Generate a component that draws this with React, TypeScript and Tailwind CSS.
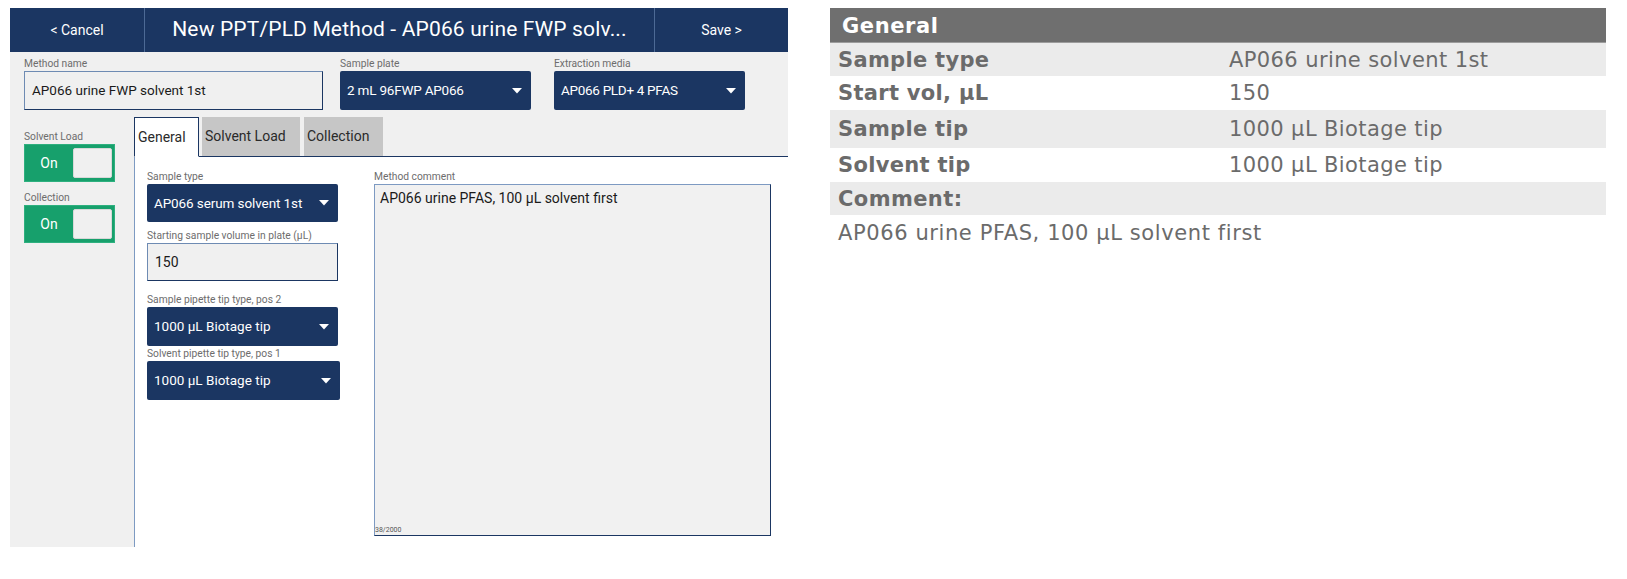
import React from 'react';

const Caret = () => (
  <svg width="10" height="6" viewBox="0 0 10 6" className="shrink-0">
    <path d="M0 0 L10 0 L5 5.5 Z" fill="#ffffff" />
  </svg>
);

const Label = ({ children }: { children: React.ReactNode }) => (
  <div className="h-[14px] text-[10.25px] leading-[14px] text-[#6d6d6d] whitespace-nowrap">{children}</div>
);

const Dropdown = ({ value, className = '' }: { value: string; className?: string }) => (
  <div
    className={`flex items-center justify-between bg-[#1b3662] rounded-[2px] pl-[7px] pr-[9px] text-white text-[13.5px] ${className}`}
  >
    <span className="whitespace-nowrap">{value}</span>
    <Caret />
  </div>
);

const Toggle = ({ label }: { label: string }) => (
  <div>
    <Label>{label}</Label>
    <div className="flex items-center h-[38px] w-[91px] bg-[#17a06c] border border-[#2eb07f]">
      <span className="w-[48px] text-center text-white text-[14px]">On</span>
      <div className="h-[30px] w-[39px] bg-[#f0f0f0] border border-[#d8d8d8] rounded-[2px]" />
    </div>
  </div>
);

const rows = [
  { label: 'Sample type', value: 'AP066 urine solvent 1st', h: 'h-[33px]', bg: 'bg-[#ebebeb]' },
  { label: 'Start vol, µL', value: '150', h: 'h-[34px]', bg: 'bg-white' },
  { label: 'Sample tip', value: '1000 µL Biotage tip', h: 'h-[38px]', bg: 'bg-[#ebebeb]' },
  { label: 'Solvent tip', value: '1000 µL Biotage tip', h: 'h-[34px]', bg: 'bg-white' },
];

export default function App() {
  return (
    <div className="flex min-h-[579px] w-[1627px] bg-white">
      {/* Method editor */}
      <div className="ml-[10px] mt-[8px] flex h-[539px] w-[778px] flex-col [font-family:Roboto,sans-serif]">
        <header className="flex h-[44px] bg-[#1b3662] text-white">
          <div className="flex w-[135px] items-center justify-center border-r border-[#4d6a95] text-[14px]">
            &lt; Cancel
          </div>
          <div className="flex flex-1 items-center justify-center text-[21px] tracking-[0.15px] whitespace-nowrap">
            New PPT/PLD Method - AP066 urine FWP solv...
          </div>
          <div className="flex w-[134px] items-center justify-center border-l border-[#4d6a95] text-[14px]">
            Save &gt;
          </div>
        </header>

        <div className="flex flex-1 flex-col bg-[#f0f0f0]">
          <div className="flex pl-[14px] pt-[5px]">
            <div className="w-[299px]">
              <Label>Method name</Label>
              <div className="flex h-[39px] items-center border border-[#6e8bb3] border-r-[#1b3662] border-b-[#1b3662] bg-[#f0f0f0] pl-[7px] text-[13.5px] text-[#1a1a1a]">
                AP066 urine FWP solvent 1st
              </div>
            </div>
            <div className="ml-[17px] w-[191px]">
              <Label>Sample plate</Label>
              <Dropdown value="2 mL 96FWP AP066" className="h-[39px] tracking-[-0.2px]" />
            </div>
            <div className="ml-[23px] w-[191px]">
              <Label>Extraction media</Label>
              <Dropdown value="AP066 PLD+ 4 PFAS" className="h-[39px] tracking-[-0.3px]" />
            </div>
          </div>

          <div className="flex flex-1 pl-[14px]">
            <div className="flex w-[91px] flex-col gap-[9px] pt-[20px]">
              <Toggle label="Solvent Load" />
              <Toggle label="Collection" />
            </div>

            <div className="ml-[19px] mt-[7px] flex flex-1 flex-col">
              {/* Tabs */}
              <div className="flex h-[40px] border-b border-[#1b3662] text-[14px] text-[#2a2a2a]">
                <div className="-mb-px flex w-[65px] items-center border border-[#1b3662] border-b-white bg-white pl-[3px]">
                  General
                </div>
                <div className="ml-[3px] flex w-[98px] items-center bg-[#c6c6c6] pl-[3px]">Solvent Load</div>
                <div className="ml-[4px] flex w-[79px] items-center bg-[#c6c6c6] pl-[3px]">Collection</div>
              </div>

              <div className="flex flex-1 border-l border-[#7d9ac2] bg-white pl-[12px] pt-[13px]">
                <div className="flex w-[193px] flex-col">
                  <Label>Sample type</Label>
                  <Dropdown value="AP066 serum solvent 1st" className="h-[38px] w-[191px] tracking-[-0.1px]" />
                  <div className="mt-[7px]">
                    <Label>Starting sample volume in plate (µL)</Label>
                  </div>
                  <div className="flex h-[38px] w-[191px] items-center border border-[#6e8bb3] border-r-[#1b3662] border-b-[#1b3662] bg-[#f0f0f0] pl-[7px] text-[14px] text-[#1a1a1a]">
                    150
                  </div>
                  <div className="mt-[12px]">
                    <Label>Sample pipette tip type, pos 2</Label>
                  </div>
                  <Dropdown value="1000 µL Biotage tip" className="h-[39px] w-[191px]" />
                  <div className="mt-[1px]">
                    <Label>Solvent pipette tip type, pos 1</Label>
                  </div>
                  <Dropdown value="1000 µL Biotage tip" className="h-[39px] w-[193px]" />
                </div>

                <div className="ml-[34px] w-[397px]">
                  <Label>Method comment</Label>
                  <div className="flex h-[352px] flex-col border border-[#7d9ac2] border-r-[#1b3662] border-b-[#1b3662] bg-[#f1f1f1]">
                    <div className="px-[5px] pt-[4px] text-[14px] leading-[18px] text-[#1a1a1a]">
                      AP066 urine PFAS, 100 µL solvent first
                    </div>
                    <div className="mt-auto text-[7px] leading-[9px] text-[#555]">38/2000</div>
                  </div>
                </div>
              </div>
            </div>
          </div>
        </div>
      </div>

      {/* Summary */}
      <div className="ml-[42px] mt-[8px] w-[776px] text-[#6b6b6b] [font-family:'DejaVu_Sans',Verdana,sans-serif]">
        <div className="flex h-[35px] items-center border-b border-[#9c9c9c] bg-[#6f6f6f] pl-[12px] pt-[4px] text-[21px] font-bold tracking-[0.6px] text-white">
          General
        </div>
        {rows.map((r) => (
          <div key={r.label} className={`grid grid-cols-[399px_1fr] items-center pt-[2px] ${r.h} ${r.bg}`}>
            <div className="pl-[8px] text-[21px] font-bold tracking-[0.3px]">{r.label}</div>
            <div className="text-[21px] tracking-[0.4px]">{r.value}</div>
          </div>
        ))}
        <div className="flex h-[33px] items-center bg-[#ebebeb] pl-[8px] pt-[2px] text-[21px] font-bold tracking-[0.4px]">
          Comment:
        </div>
        <div className="pl-[8px] pt-[3px] text-[21px] leading-[30px] tracking-[0.6px]">
          AP066 urine PFAS, 100 µL solvent first
        </div>
      </div>
    </div>
  );
}
